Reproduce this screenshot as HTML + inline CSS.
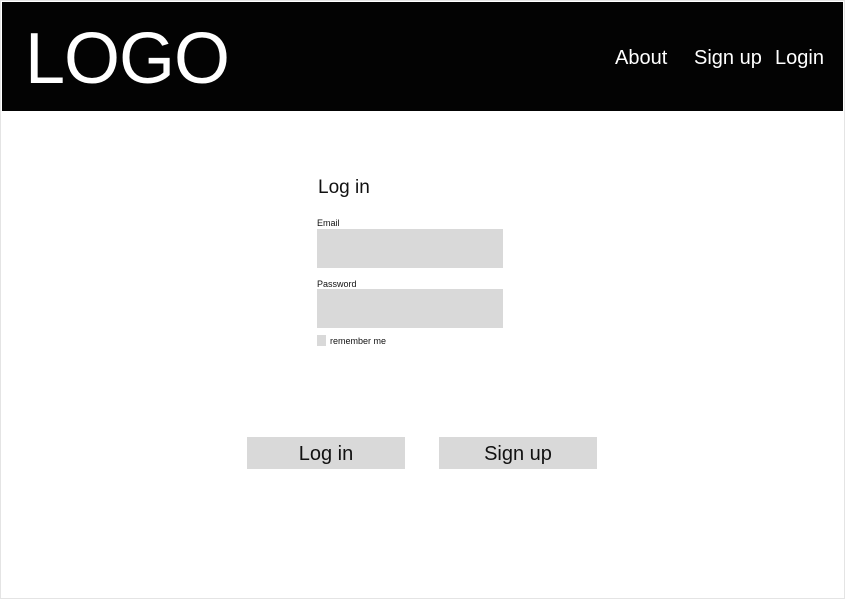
<!DOCTYPE html>
<html><head><style>
html,body{margin:0;padding:0;}
body{width:845px;height:599px;background:#fff;position:relative;overflow:hidden;font-family:"Liberation Sans",sans-serif;}
.frame{position:absolute;left:0;top:0;width:843px;height:597px;border:1px solid #e4e4e4;}
.hdr{position:absolute;left:2px;top:2px;width:841px;height:109px;background:#030303;}
.logo{position:absolute;left:25px;top:19px;font-size:72px;color:#fff;line-height:80px;letter-spacing:-1px;}
.nav{position:absolute;top:46px;font-size:20px;color:#fff;line-height:24px;}
.t{position:absolute;color:#111;}
.box{position:absolute;background:#d9d9d9;}
.btn{position:absolute;background:#d9d9d9;font-size:20px;text-align:center;line-height:34px;color:#111;}
</style></head><body>
<div class="frame"></div>
<div class="hdr"></div>
<div class="logo">LOGO</div>
<div class="nav" style="left:615px">About</div>
<div class="nav" style="left:694px">Sign up</div>
<div class="nav" style="left:775px">Login</div>
<div class="t" style="left:318px;top:176px;font-size:19px;line-height:24px">Log in</div>
<div class="t" style="left:317px;top:218px;font-size:9px;line-height:11px">Email</div>
<div class="box" style="left:317px;top:229px;width:186px;height:39px"></div>
<div class="t" style="left:317px;top:279px;font-size:9px;line-height:11px">Password</div>
<div class="box" style="left:317px;top:289px;width:186px;height:39px"></div>
<div class="box" style="left:317px;top:335px;width:9px;height:11px"></div>
<div class="t" style="left:330px;top:336px;font-size:9px;line-height:11px">remember me</div>
<div class="btn" style="left:247px;top:437px;width:158px;height:32px">Log in</div>
<div class="btn" style="left:439px;top:437px;width:158px;height:32px">Sign up</div>
</body></html>
